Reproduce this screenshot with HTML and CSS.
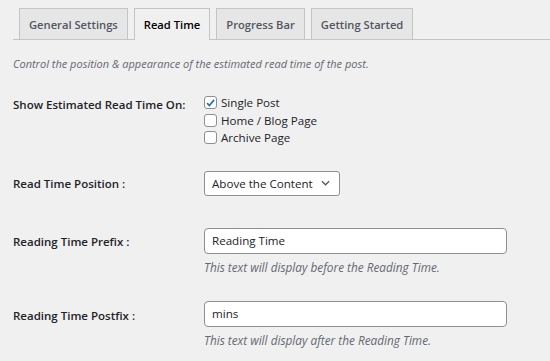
FILE: index.html
```html
<!DOCTYPE html>
<html lang="en">
<head>
    <meta charset="UTF-8">
    <meta name="viewport" content="width=device-width, initial-scale=1.0">
    <title>Read Time Settings</title>
    <link rel="stylesheet" href="styles.css">
</head>
<body>

    <div class="wrap">
        <!-- Tabs -->
        <nav class="tabs">
            <a class="tab">General Settings</a>
            <a class="tab active">Read Time</a>
            <a class="tab">Progress Bar</a>
            <a class="tab">Getting Started</a>
        </nav>

        <p class="intro">Control the position &amp; appearance of the estimated read time of the post.</p>

        <div class="form">
            <div class="row row-show">
                <div class="label">Show Estimated Read Time On:</div>
                <div class="field">
                    <label class="check"><span class="box checked"><svg viewBox="0 0 12 12" width="12" height="12"><path d="M2.3 6.2 L4.8 8.8 L9.9 2.6" fill="none" stroke="#2271b1" stroke-width="1.8"/></svg></span>Single Post</label>
                    <label class="check"><span class="box"></span>Home / Blog Page</label>
                    <label class="check"><span class="box"></span>Archive Page</label>
                </div>
            </div>

            <div class="row row-position">
                <div class="label">Read Time Position :</div>
                <div class="field">
                    <div class="select">
                        <span>Above the Content</span>
                        <svg viewBox="0 0 10 6" width="9" height="6"><path d="M1 1 L5 5 L9 1" fill="none" stroke="#50575e" stroke-width="1.4"/></svg>
                    </div>
                </div>
            </div>

            <div class="row row-prefix">
                <div class="label">Reading Time Prefix :</div>
                <div class="field">
                    <div class="input">Reading Time</div>
                    <p class="desc">This text will display before the Reading Time.</p>
                </div>
            </div>

            <div class="row row-postfix">
                <div class="label">Reading Time Postfix :</div>
                <div class="field">
                    <div class="input">mins</div>
                    <p class="desc">This text will display after the Reading Time.</p>
                </div>
            </div>
        </div>
    </div>

</body>
</html>
```

FILE: styles.css
```css
body {
    margin: 0;
    background-color: #f0f0f1;
    color: #1d2327;
    font-family: 'Open Sans', 'Noto Sans', sans-serif;
    font-size: 11.6px;
}

.wrap {
    padding: 8px 0 0 13px;
}

/* Tabs */
.tabs {
    display: flex;
    gap: 6px;
    padding-left: 6px;
    border-bottom: 1px solid #c3c4c7;
    height: 31px;
}

.tab {
    display: flex;
    align-items: center;
    padding: 0 9px;
    height: 30px;
    background-color: #e6e6e7;
    border: 1px solid #c3c4c7;
    border-bottom: none;
    color: #50575e;
    font-size: 11.2px;
    font-weight: 600;
}

.tab.active {
    background-color: #f0f0f1;
    color: #000000;
    height: 31px;
    margin-bottom: -1px;
}

.intro {
    margin: 16px 0 0 0;
    line-height: 16px;
    font-size: 11px;
    font-style: italic;
    color: #646970;
}

/* Form rows */
.row {
    display: grid;
    grid-template-columns: 191px 1fr;
}

.label {
    font-weight: 600;
    font-size: 11.5px;
    line-height: 16px;
    padding-top: 6px;
}

.row-show { margin-top: 22px; }
.row-show .label { padding-top: 3px; }
.row-position { margin-top: 24px; }
.row-position .label { padding-top: 5px; }
.row-prefix { margin-top: 32px; }
.row-postfix { margin-top: 26px; }
.row-postfix .label { padding-top: 7px; }

.check {
    display: flex;
    align-items: center;
    height: 17.5px;
    gap: 4px;
}

.box {
    width: 11px;
    height: 11px;
    border: 1px solid #8c8f94;
    border-radius: 3px;
    background-color: #ffffff;
    display: flex;
    align-items: center;
    justify-content: center;
}

.select {
    height: 23px;
    border: 1px solid #8c8f94;
    border-radius: 3px;
    background-color: #ffffff;
    display: flex;
    align-items: center;
    justify-content: space-between;
    padding: 0 9px 0 7px;
    box-sizing: content-box;
    width: 118px;
}

.input {
    width: 287px;
    height: 24px;
    border: 1px solid #8c8f94;
    border-radius: 4px;
    background-color: #ffffff;
    display: flex;
    align-items: center;
    padding: 0 7px;
}

.desc {
    margin: 5px 0 0 0;
    line-height: 16px;
    font-size: 11.8px;
    font-style: italic;
    color: #646970;
}
```
